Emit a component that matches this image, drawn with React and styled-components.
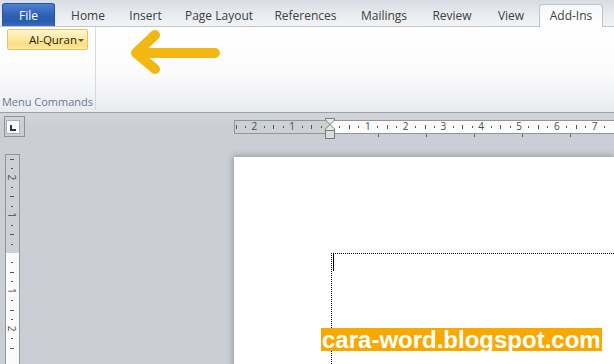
import React from "react";
import styled, { createGlobalStyle } from "styled-components";

const GlobalStyle = createGlobalStyle`
  body {
    margin: 0;
    font-family: "Open Sans", "Noto Sans", sans-serif;
  }
`;

const SCWindow = styled.div`
  position: relative;
  width: 614px;
  height: 364px;
  overflow: hidden;
  display: flex;
  flex-direction: column;
  background-color: #cbcfd5;
`;

const SCTabBar = styled.div`
  position: relative;
  z-index: 1;
  flex-shrink: 0;
  height: 26px;
  display: flex;
  align-items: flex-end;
  padding-left: 2px;
  background: linear-gradient(#d9dde3, #eceff2 70%, #f1f3f5);
`;

const SCFileTab = styled.div`
  width: 53px;
  height: 23px;
  margin-right: 4px;
  display: flex;
  align-items: center;
  justify-content: center;
  box-sizing: border-box;
  border: 1px solid #2654a0;
  border-bottom: none;
  border-radius: 3px 3px 0 0;
  background: linear-gradient(#4c80d2, #2d5fb2 55%, #2a5cae 80%, #3a6cc0);
  color: #ffffff;
  font-size: 12px;
`;

const SCTab = styled.div`
  width: ${(props) => props.$w}px;
  height: ${(props) => (props.$active ? "23px" : "22px")};
  margin-bottom: ${(props) => (props.$active ? "-1px" : "0")};
  display: flex;
  align-items: center;
  justify-content: center;
  box-sizing: border-box;
  padding-bottom: ${(props) => (props.$active ? "1px" : "0")};
  font-size: 12px;
  color: #404040;
  white-space: nowrap;
  border: ${(props) => (props.$active ? "1px solid #bcc2c9" : "none")};
  border-bottom: none;
  border-radius: 3px 3px 0 0;
  background: ${(props) =>
    props.$active ? "linear-gradient(#f7f8fa, #ffffff)" : "transparent"};
`;

const SCRibbon = styled.div`
  position: relative;
  flex-shrink: 0;
  height: 85px;
  display: flex;
  border-top: 1px solid #bfc5cc;
  border-bottom: 1px solid #9aa0a8;
  background: linear-gradient(#ffffff, #fbfbfc 55%, #e9ebee);
`;

const SCGroup = styled.div`
  width: 95px;
  display: flex;
  flex-direction: column;
  justify-content: space-between;
  align-items: flex-start;
  border-right: 1px solid #d6dade;
  margin-bottom: 2px;
`;

const SCDropButton = styled.div`
  margin: 2px 0 0 7px;
  width: 81px;
  height: 21px;
  box-sizing: border-box;
  display: flex;
  align-items: center;
  justify-content: space-between;
  padding: 0 3px 0 21px;
  white-space: nowrap;
  border: 1px solid #e6c35c;
  border-radius: 2px;
  background: linear-gradient(#fff6d2, #fde9a3 45%, #fcdd80 75%, #fde9a6);
  font-size: 11.5px;
  color: #1c1c1c;
`;

const SCCaret = styled.span`
  flex-shrink: 0;
  width: 0;
  height: 0;
  border-left: 3px solid transparent;
  border-right: 3px solid transparent;
  border-top: 3px solid #5a5a5a;
  margin-top: 1px;
`;

const SCGroupLabel = styled.div`
  align-self: stretch;
  text-align: center;
  font-size: 11px;
  line-height: 14px;
  color: #677a95;
  white-space: nowrap;
  padding-bottom: 1px;
`;

const SCArrow = styled.svg`
  position: absolute;
  left: 125px;
  top: 0;
`;

const SCWorkspace = styled.div`
  flex: 1;
  min-height: 0;
  display: flex;
  background: linear-gradient(#d3d6da, #cbcfd5 12px);
`;

const SCLeftRail = styled.div`
  width: 234px;
  flex-shrink: 0;
  display: flex;
  flex-direction: column;
  padding-left: 4px;
  box-sizing: border-box;
`;

const SCTabSelector = styled.div`
  margin-top: 3px;
  width: 21px;
  height: 22px;
  box-sizing: border-box;
  border: 1px solid #8c939b;
  padding: 3px 0 0 1px;
`;

const SCTabSelectorInner = styled.div`
  width: 14px;
  height: 14px;
  box-sizing: border-box;
  border: 1px solid #a9afb6;
  background-color: #ffffff;
  position: relative;

  &::after {
    content: "";
    position: absolute;
    left: 3px;
    top: 4px;
    width: 4px;
    height: 4px;
    border-left: 2px solid #333333;
    border-bottom: 2px solid #333333;
  }
`;

const SCVRuler = styled.svg`
  display: block;
  flex-shrink: 0;
  margin-top: 17px;
  margin-left: 1px;
`;

const SCMain = styled.div`
  flex: 1;
  display: flex;
  flex-direction: column;
`;

const SCHRuler = styled.svg`
  display: block;
  flex-shrink: 0;
  margin-top: 5px;
`;

const SCPage = styled.div`
  flex: 1;
  margin-top: 17px;
  background-color: #ffffff;
  box-shadow: 0 0 6px 1px rgba(70, 78, 90, 0.45);
  padding: 96px 0 0 97px;
`;

const SCTextArea = styled.div`
  height: 200px;
  border-top: 1px dotted #000000;
  border-left: 1px dotted #000000;
  padding-left: 1px;
`;

const SCCursor = styled.div`
  width: 1px;
  height: 17px;
  background-color: #000000;
`;

const SCWatermark = styled.div`
  position: absolute;
  left: 321px;
  top: 328px;
  height: 23px;
  padding: 0 1px;
  background-color: #f8a900;
  color: #ffffff;
  font-family: "Liberation Sans", Arial, sans-serif;
  font-weight: bold;
  font-size: 24px;
  line-height: 23px;
`;

const tabs = [
  { label: "Home", w: 58 },
  { label: "Insert", w: 57 },
  { label: "Page Layout", w: 90 },
  { label: "References", w: 83 },
  { label: "Mailings", w: 74 },
  { label: "Review", w: 62 },
  { label: "View", w: 56 },
  { label: "Add-Ins", w: 64, active: true },
];

const INCH = 37.8;
const Q = INCH / 4;

function HorizontalRuler() {
  const margin = 96;
  const marks = [];
  for (let i = -10; i <= 30; i++) {
    const x = margin + i * Q;
    if (i === 0) continue;
    if (i % 4 === 0) {
      marks.push(
        <text
          key={i}
          x={x}
          y={12}
          fontSize="10"
          textAnchor="middle"
          fill="#4a4a4a"
          fontFamily="Open Sans, sans-serif"
        >
          {Math.abs(i / 4)}
        </text>
      );
    } else if (Math.abs(i % 4) === 2) {
      marks.push(<rect key={i} x={Math.round(x)} y={7} width={1} height={4} fill="#555" />);
    } else {
      marks.push(<rect key={i} x={Math.round(x)} y={8} width={1} height={2} fill="#555" />);
    }
  }
  const stops = [144, 192, 240, 288, 336];
  return (
    <SCHRuler width="380" height="22" viewBox="0 0 380 22">
      <rect x="0.5" y="2.5" width="400" height="13" fill="#fbfbfb" stroke="#8f969e" />
      <rect x="1" y="3" width={margin - 1} height="12" fill="#cdd1d6" />
      {marks}
      {stops.map((s) => (
        <rect key={s} x={s} y={16} width={1} height={3} fill="#666" />
      ))}
      <polygon
        points="91.5,0.5 100.5,0.5 100.5,2 96,6.5 91.5,2"
        fill="#e8e8e8"
        stroke="#7b7b7b"
      />
      <polygon
        points="96,6.5 100.5,11 100.5,12.5 91.5,12.5 91.5,11"
        fill="#e8e8e8"
        stroke="#7b7b7b"
      />
      <rect x="91.5" y="12.5" width="9" height="8" fill="#dcdcdc" stroke="#7b7b7b" />
    </SCHRuler>
  );
}

function VerticalRuler() {
  const margin = 99;
  const marks = [];
  for (let i = -10; i <= 10; i++) {
    const y = margin + i * Q;
    if (i === 0) continue;
    if (i % 4 === 0) {
      marks.push(
        <text
          key={i}
          x={7}
          y={y}
          fontSize="10"
          textAnchor="middle"
          dominantBaseline="central"
          fill="#4a4a4a"
          fontFamily="Open Sans, sans-serif"
          transform={`rotate(90 7 ${y})`}
        >
          {Math.abs(i / 4)}
        </text>
      );
    } else if (Math.abs(i % 4) === 2) {
      marks.push(<rect key={i} x={5} y={Math.round(y)} width={4} height={1} fill="#555" />);
    } else {
      marks.push(<rect key={i} x={6} y={Math.round(y)} width={2} height={1} fill="#555" />);
    }
  }
  return (
    <SCVRuler width="16" height="210" viewBox="0 0 16 210">
      <rect x="0.5" y="0.5" width="14" height="230" fill="#fbfbfb" stroke="#8f969e" />
      <rect x="1" y="1" width="13" height={margin - 1} fill="#cdd1d6" />
      {marks}
    </SCVRuler>
  );
}

function App() {
  return (
    <SCWindow>
      <GlobalStyle />
      <SCTabBar>
        <SCFileTab>File</SCFileTab>
        {tabs.map((t) => (
          <SCTab key={t.label} $w={t.w} $active={t.active}>
            {t.label}
          </SCTab>
        ))}
      </SCTabBar>
      <SCRibbon>
        <SCGroup>
          <SCDropButton>
            Al-Quran
            <SCCaret />
          </SCDropButton>
          <SCGroupLabel>Menu Commands</SCGroupLabel>
        </SCGroup>
        <SCArrow width="100" height="60" viewBox="0 0 100 60">
          <path
            d="M90 26 L12 26 M30 8 L11 26 L30 42"
            fill="none"
            stroke="#f3b713"
            strokeWidth="10"
            strokeLinecap="round"
            strokeLinejoin="round"
          />
        </SCArrow>
      </SCRibbon>
      <SCWorkspace>
        <SCLeftRail>
          <SCTabSelector>
            <SCTabSelectorInner />
          </SCTabSelector>
          <VerticalRuler />
        </SCLeftRail>
        <SCMain>
          <HorizontalRuler />
          <SCPage>
            <SCTextArea>
              <SCCursor />
            </SCTextArea>
          </SCPage>
        </SCMain>
      </SCWorkspace>
      <SCWatermark>cara-word.blogspot.com</SCWatermark>
    </SCWindow>
  );
}

export default App;
